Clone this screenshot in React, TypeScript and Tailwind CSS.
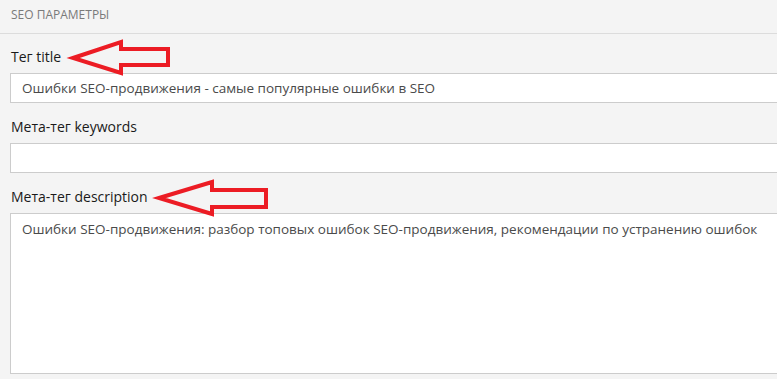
import React from "react";

function Arrow({ points, className }: { points: string; className: string }) {
  return (
    <svg className={className} width="777" height="379" viewBox="0 0 777 379">
      <polygon points={points} fill="none" stroke="#ec1c24" strokeWidth="4" strokeLinejoin="miter" />
    </svg>
  );
}

export default function App() {
  return (
    <div
      className="relative w-[777px] h-[379px] overflow-hidden bg-[#f4f4f4]"
      style={{ fontFamily: '"Open Sans", "Noto Sans", sans-serif' }}
    >
      <div className="h-[34px] border-b border-[#dcdcdc] pl-[11px] pt-[7px] text-[12px] leading-[16px] text-[#7a7a7a] uppercase">
        SEO параметры
      </div>
      <div className="pl-[10px] pt-[13px] flex flex-col">
        <div className="text-[14px] leading-[20px] font-medium text-[#1a1a1a] pl-[1px]">Тег title</div>
        <div className="mt-[6px] w-[800px] h-[30px] bg-white border border-[#cccccc] pl-[11px] flex items-center text-[13.5px] text-[#4a4a4a] whitespace-nowrap">
          Ошибки SEO-продвижения - самые популярные ошибки в SEO
        </div>
        <div className="mt-[14px] text-[14px] leading-[20px] font-medium text-[#1a1a1a] pl-[1px]">Мета-тег keywords</div>
        <div className="mt-[6px] w-[800px] h-[30px] bg-white border border-[#cccccc]" />
        <div className="mt-[14px] text-[14px] leading-[20px] font-medium text-[#1a1a1a] pl-[1px]">Мета-тег description</div>
        <div className="mt-[6px] w-[800px] h-[161px] bg-white border border-[#cccccc] pl-[11px] pt-[5px] text-[13.5px] leading-[20px] text-[#4a4a4a] whitespace-nowrap">
          Ошибки SEO-продвижения: разбор топовых ошибок SEO-продвижения, рекомендации по устранению ошибок
        </div>
      </div>
      <Arrow
        className="absolute left-0 top-0 pointer-events-none"
        points="73,58 121,42 121,49 168,49 168,65 121,65 121,73"
      />
      <Arrow
        className="absolute left-0 top-0 pointer-events-none"
        points="159,198 212,182 212,190 266,190 266,207 212,207 212,214"
      />
    </div>
  );
}
